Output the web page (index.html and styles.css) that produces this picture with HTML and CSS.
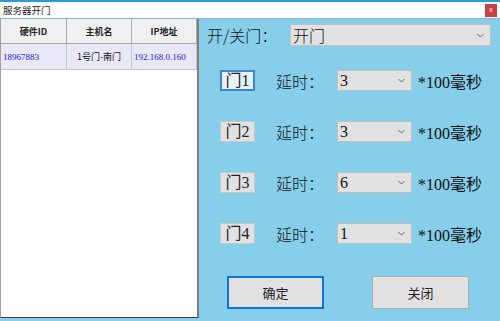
FILE: index.html
```html
<!DOCTYPE html>
<html lang="zh-CN">
<head>
    <meta charset="UTF-8">
    <title>服务器开门</title>
    <link rel="stylesheet" href="styles.css">
</head>
<body>
    <div class="window">
        <div class="titlebar">
            <span class="title">服务器开门</span>
            <span class="close">x</span>
        </div>
        <div class="content">
            <div class="list">
                <div class="row head">
                    <div class="cell">硬件ID</div>
                    <div class="cell">主机名</div>
                    <div class="cell">IP地址</div>
                </div>
                <div class="row item">
                    <div class="cell blue left">18967883</div>
                    <div class="cell">1号门-南门</div>
                    <div class="cell blue left">192.168.0.160</div>
                </div>
            </div>
            <div class="panel">
                <div class="mode">
                    <span class="mode-label">开/关门：</span>
                    <div class="combo wide"><span>开门</span><svg width="7" height="5" viewBox="0 0 7 5"><path d="M0.5 1 L3.5 4 L6.5 1" fill="none" stroke="#666" stroke-width="1"/></svg></div>
                </div>
                <div class="door">
                    <div class="door-btn focus">门1</div>
                    <span class="delay">延时：</span>
                    <div class="combo"><span>3</span><svg width="7" height="5" viewBox="0 0 7 5"><path d="M0.5 1 L3.5 4 L6.5 1" fill="none" stroke="#666" stroke-width="1"/></svg></div>
                    <span class="unit">*100毫秒</span>
                </div>
                <div class="door">
                    <div class="door-btn">门2</div>
                    <span class="delay">延时：</span>
                    <div class="combo"><span>3</span><svg width="7" height="5" viewBox="0 0 7 5"><path d="M0.5 1 L3.5 4 L6.5 1" fill="none" stroke="#666" stroke-width="1"/></svg></div>
                    <span class="unit">*100毫秒</span>
                </div>
                <div class="door">
                    <div class="door-btn">门3</div>
                    <span class="delay">延时：</span>
                    <div class="combo"><span>6</span><svg width="7" height="5" viewBox="0 0 7 5"><path d="M0.5 1 L3.5 4 L6.5 1" fill="none" stroke="#666" stroke-width="1"/></svg></div>
                    <span class="unit">*100毫秒</span>
                </div>
                <div class="door">
                    <div class="door-btn">门4</div>
                    <span class="delay">延时：</span>
                    <div class="combo"><span>1</span><svg width="7" height="5" viewBox="0 0 7 5"><path d="M0.5 1 L3.5 4 L6.5 1" fill="none" stroke="#666" stroke-width="1"/></svg></div>
                    <span class="unit">*100毫秒</span>
                </div>
                <div class="actions">
                    <div class="action focus">确定</div>
                    <div class="action">关闭</div>
                </div>
            </div>
        </div>
    </div>
</body>
</html>
```
FILE: styles.css
```css
body {
    margin: 0;
    font-family: "Liberation Serif", "Noto Sans CJK SC", serif;
    background-color: #87ceeb;
}
.window {
    width: 500px;
    height: 321px;
    display: flex;
    flex-direction: column;
    overflow: hidden;
}
.titlebar {
    height: 16px;
    border-top: 2px solid #2b9ad6;
    border-bottom: 1px solid #8ab8d0;
    background-color: #ffffff;
    display: flex;
    align-items: center;
    justify-content: space-between;
    padding: 0 3px 0 3px;
}
.title {
    font-family: "Noto Sans CJK SC", sans-serif;
    font-size: 9.5px;
    color: #222;
}
.close {
    width: 12px;
    height: 13px;
    background-color: #c8424a;
    color: #fff;
    font-family: "Liberation Sans", sans-serif;
    font-size: 7px;
    line-height: 12px;
    text-align: center;
}
.content {
    flex: 1;
    display: flex;
}
.list {
    width: 196px;
    height: 298px;
    background-color: #ffffff;
    border-left: 1px solid #a0a0a0;
    border-right: 2px solid #808080;
    border-bottom: 1px solid #404040;
}
.row {
    display: grid;
    grid-template-columns: 66px 65px 65px;
}
.row .cell {
    font-family: "Noto Sans CJK SC", sans-serif;
    font-size: 9px;
    display: flex;
    align-items: center;
    justify-content: center;
    border-right: 1px solid #c8c8c8;
    border-bottom: 1px solid #c8c8c8;
}
.head .cell {
    height: 24px;
    background-color: #f0f0f0;
    font-weight: bold;
    color: #222;
    border-color: #a8a8a8;
}
.item .cell {
    height: 25px;
    background-color: #e8e8f8;
    color: #111;
}
.item .cell.blue {
    color: #2020d0;
    font-family: "Liberation Serif", serif;
}
.item .cell.left {
    justify-content: flex-start;
    padding-left: 2px;
}
.panel {
    flex: 1;
    padding: 5px 9px 0 8px;
}
.mode {
    display: flex;
    align-items: center;
    height: 22px;
}
.mode-label {
    width: 83px;
    font-size: 16px;
    font-family: "Noto Sans CJK SC", sans-serif;
    font-weight: 300;
    color: #111;
}
.combo {
    box-sizing: border-box;
    height: 21px;
    width: 75px;
    background-color: #e1e1e1;
    border: 1px solid #c0c0c0;
    display: flex;
    align-items: center;
    justify-content: space-between;
    padding: 0 6px 0 2px;
    font-size: 16px;
    color: #111;
}
.combo.wide {
    width: 201px;
    height: 22px;
    font-family: "Noto Sans CJK SC", sans-serif;
    font-weight: 300;
}
.door {
    display: flex;
    align-items: center;
    height: 21px;
    margin-top: 30px;
    padding-left: 13px;
}
.mode + .door {
    margin-top: 24px;
}
.door-btn {
    box-sizing: border-box;
    width: 35px;
    height: 21px;
    background-color: #e1e1e1;
    border: 1px solid #c8c8c8;
    font-size: 16px;
    font-family: "Liberation Serif", "Noto Sans CJK SC", serif;
    color: #222;
    text-align: center;
    line-height: 19px;
}
.door-btn.focus {
    background-color: #e5f1fb;
    border: 2px solid #3d86cc;
    line-height: 17px;
}
.delay {
    width: 61px;
    margin-left: 21px;
    font-size: 16px;
    font-family: "Noto Sans CJK SC", sans-serif;
    font-weight: 300;
    color: #111;
}
.unit {
    margin-left: 6px;
    font-size: 16px;
    color: #111;
}
.actions {
    display: flex;
    gap: 48px;
    margin-top: 32px;
    padding-left: 20px;
}
.action {
    box-sizing: border-box;
    width: 97px;
    height: 33px;
    background-color: #e1e1e1;
    border: 1px solid #adadad;
    font-family: "Noto Sans CJK SC", sans-serif;
    font-size: 13px;
    color: #222;
    display: flex;
    align-items: center;
    justify-content: center;
}
.action.focus {
    border: 2px solid #0f78d7;
}
```
